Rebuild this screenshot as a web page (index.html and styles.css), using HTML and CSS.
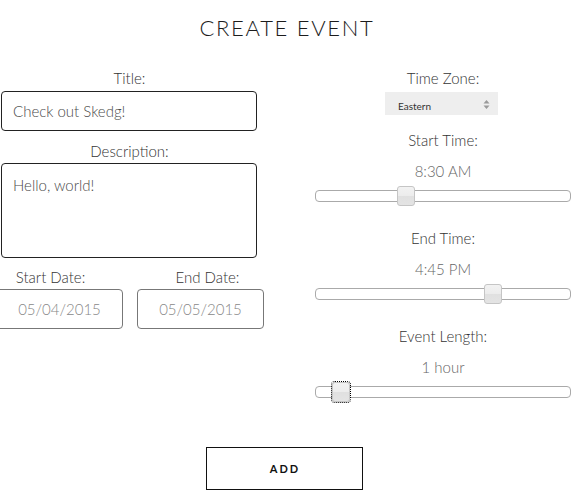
FILE: index.html
```html
<!DOCTYPE html>
<html lang="en">
<head>
<meta charset="utf-8">
<title>Create Event</title>
<link rel="stylesheet" href="styles.css">
</head>
<body>
<h1 class="page-title">CREATE EVENT</h1>
<form class="event-form">
  <div class="columns">
    <div class="col col-left">
      <div class="field">
        <label class="label">Title:</label>
        <input class="text-input" type="text" value="Check out Skedg!">
      </div>
      <div class="field field-desc">
        <label class="label">Description:</label>
        <textarea class="text-area">Hello, world!</textarea>
      </div>
      <div class="date-row">
        <div class="date-group date-start">
          <label class="label">Start Date:</label>
          <input class="date-input" type="text" value="05/04/2015">
        </div>
        <div class="date-group date-end">
          <label class="label">End Date:</label>
          <input class="date-input" type="text" value="05/05/2015">
        </div>
      </div>
    </div>
    <div class="col col-right">
      <div class="rgroup">
        <label class="label">Time Zone:</label>
        <div class="tz-select">
          <span class="tz-text">Eastern</span>
          <svg class="tz-arrows" width="7" height="11" viewBox="0 0 7 11"><path d="M3.5 1 L6.5 4.5 L0.5 4.5 Z M3.5 10 L6.5 6.5 L0.5 6.5 Z" fill="#9a9a9a"/></svg>
        </div>
      </div>
      <div class="rgroup rgroup-first">
        <label class="label">Start Time:</label>
        <div class="value">8:30 AM</div>
        <div class="slider"><span class="handle" style="left:81px"></span></div>
      </div>
      <div class="rgroup">
        <label class="label">End Time:</label>
        <div class="value">4:45 PM</div>
        <div class="slider"><span class="handle" style="left:168px"></span></div>
      </div>
      <div class="rgroup">
        <label class="label">Event Length:</label>
        <div class="value">1 hour</div>
        <div class="slider"><span class="handle handle-focus" style="left:16px"></span></div>
      </div>
    </div>
  </div>
  <div class="actions">
    <button class="add-btn" type="button">ADD</button>
  </div>
</form>
</body>
</html>
```

FILE: styles.css
```css
* {
  box-sizing: border-box;
}

body {
  margin: 0;
  font-family: Lato, "Open Sans", sans-serif;
  font-weight: 300;
  color: #333;
  background: #fff;
  overflow: hidden;
}

.page-title {
  margin: 13px 0 0;
  padding-left: 2px;
  font-size: 22px;
  line-height: 29px;
  font-weight: 300;
  letter-spacing: 1.7px;
  text-align: center;
  color: #1c1c1c;
}

.columns {
  display: flex;
  margin-top: 27px;
}

.col-left {
  width: 258px;
  padding-left: 1px;
  flex: none;
}

.col-right {
  width: 256px;
  margin-left: 57px;
  flex: none;
}

.label {
  display: block;
  font-size: 15px;
  line-height: 18px;
  text-align: center;
  color: #333;
}

.text-input,
.text-area,
.date-input {
  display: block;
  font-family: inherit;
  font-weight: 300;
  font-size: 15px;
  line-height: 18px;
  background: #fff;
  outline: none;
}

.text-input {
  width: 256px;
  height: 40px;
  margin-top: 4px;
  padding: 0 11px;
  border: 1px solid #222;
  border-radius: 4px;
  color: #4a4a4a;
}

.field-desc {
  margin-top: 11px;
}

.text-area {
  width: 256px;
  height: 95px;
  margin-top: 3px;
  padding: 12px 11px;
  border: 1px solid #222;
  border-radius: 4px;
  color: #4a4a4a;
  resize: none;
}

.date-row {
  display: flex;
  gap: 14px;
  margin-top: 10px;
  margin-left: -5px;
}

.date-group {
  width: 127px;
  flex: none;
}

.date-start .label {
  padding-right: 18px;
}

.date-end .label {
  padding-left: 14px;
}

.date-input {
  width: 127px;
  height: 40px;
  margin-top: 3px;
  padding: 0;
  border: 1px solid #777;
  border-radius: 4px;
  text-align: center;
  color: #888;
}

.tz-select {
  display: flex;
  align-items: center;
  justify-content: space-between;
  width: 113px;
  height: 23px;
  margin: 5px 0 0 70px;
  padding: 2px 8px 0 13px;
  background: #eeeeee;
  font-size: 10px;
  font-weight: 400;
  color: #333;
}

.tz-text {
  line-height: 12px;
  padding-top: 3px;
}

.tz-arrows {
  display: block;
}

.rgroup-first {
  margin-top: 16px;
}

.rgroup + .rgroup:not(.rgroup-first) {
  margin-top: 27px;
}

.value {
  margin-top: 13px;
  font-size: 15px;
  line-height: 18px;
  text-align: center;
  color: #666;
}

.slider {
  position: relative;
  height: 12px;
  margin-top: 10px;
  border: 1px solid #aaa;
  border-radius: 4px;
  background: #fff;
}

.handle {
  position: absolute;
  top: -5px;
  width: 18px;
  height: 20px;
  border: 1px solid #c5c5c5;
  border-radius: 3px;
  background: linear-gradient(to bottom, #f2f2f2 0%, #ececec 50%, #e0e0e0 52%, #e4e4e4 100%);
}

.handle-focus {
  outline: 1px dotted #000;
}

.actions {
  display: flex;
  justify-content: center;
  margin-top: 49px;
}

.add-btn {
  width: 157px;
  height: 43px;
  margin-right: 4px;
  border: 1px solid #111;
  border-radius: 0;
  background: #fff;
  font-family: Lato, sans-serif;
  font-weight: 700;
  font-size: 11px;
  letter-spacing: 2px;
  padding: 0 0 0 2px;
  color: #111;
}
```
